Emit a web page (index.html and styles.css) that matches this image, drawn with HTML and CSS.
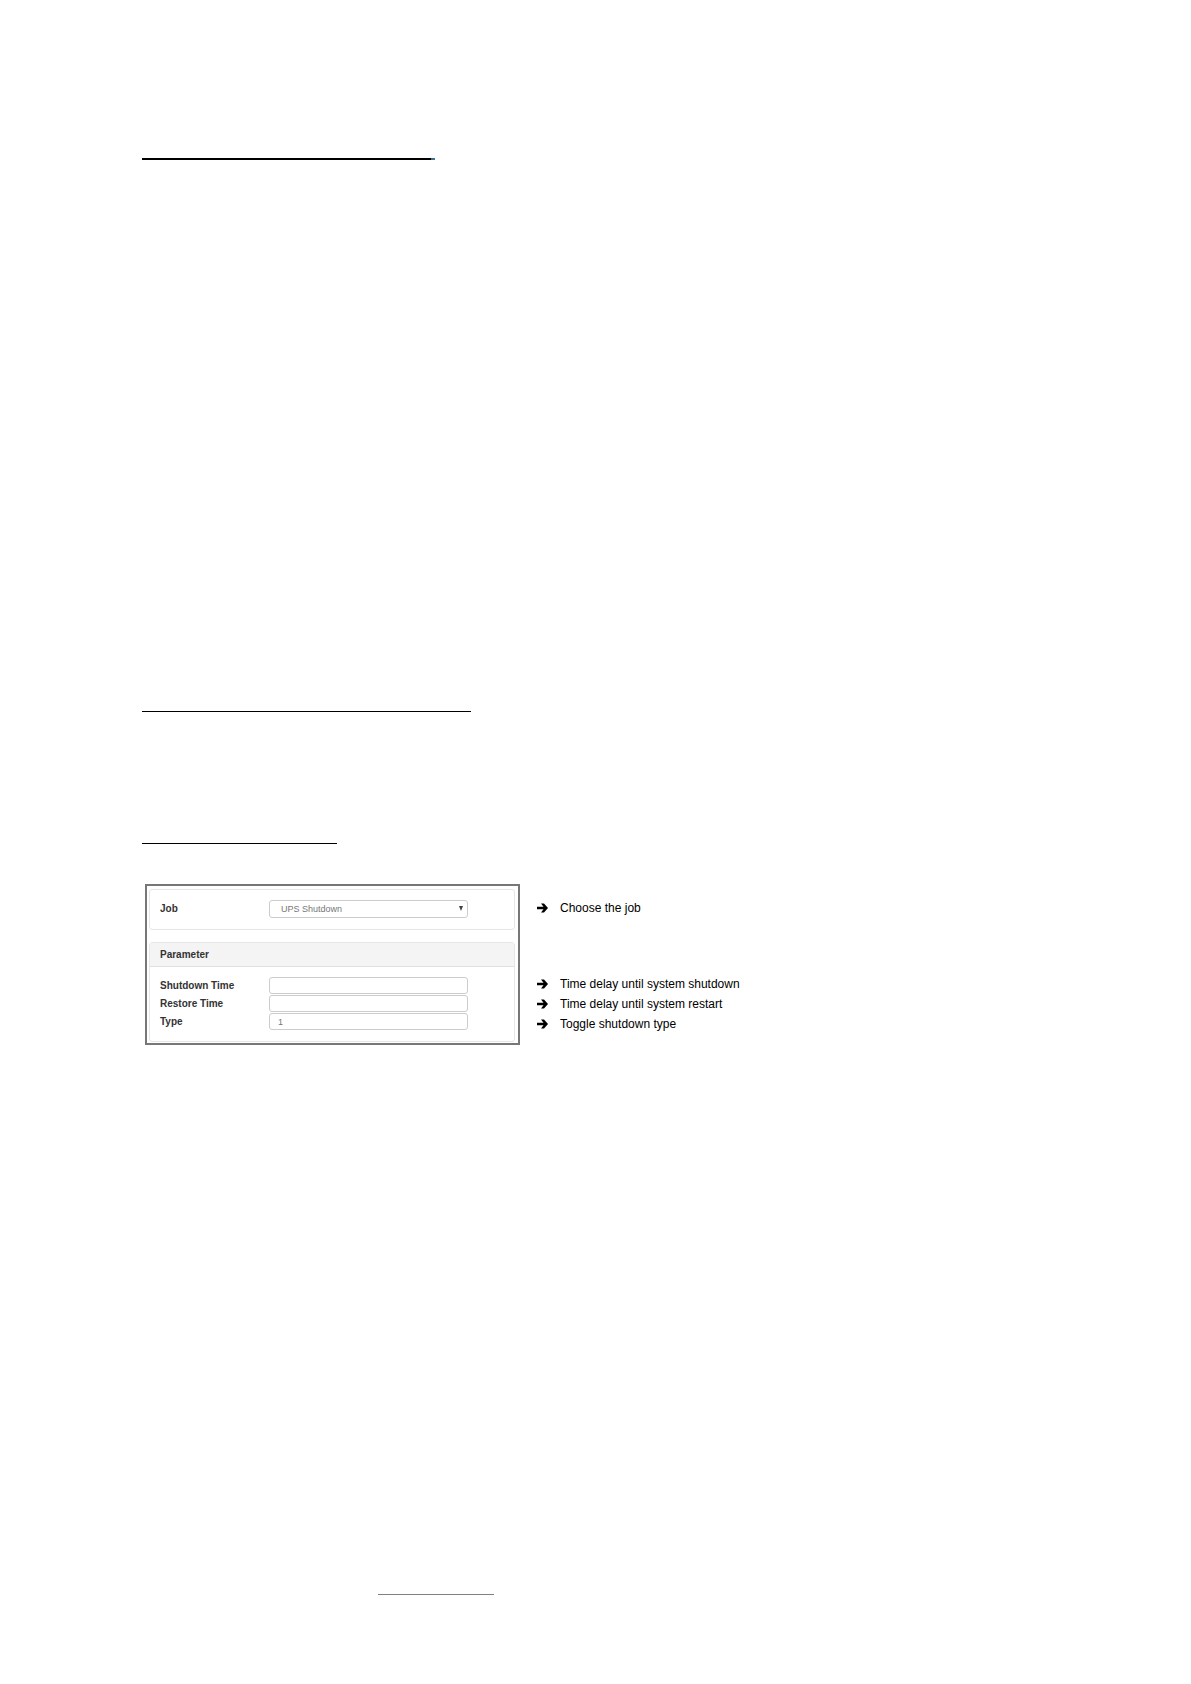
FILE: index.html
```html
<!DOCTYPE html>
<html lang="en">
<head>
<meta charset="utf-8">
<title>UPS Shutdown</title>
<link rel="stylesheet" href="styles.css">
</head>
<body>
<main class="page">
  <div class="rule rule-title"></div>
  <div class="rule rule-section"></div>
  <div class="rule rule-sub"></div>
  <section class="figure">
    <form class="frame">
      <div class="panel job">
        <div class="row row-job">
          <label for="job">Job</label>
          <div class="select-wrap">
            <select id="job" class="field"><option>UPS Shutdown</option></select>
            <svg class="caret" viewBox="0 0 4 5" aria-hidden="true"><path d="M0 0h4L2 5z"/></svg>
          </div>
        </div>
      </div>
      <div class="panel parameter">
        <h2 class="panel-head">Parameter</h2>
        <div class="rows">
          <div class="row"><label for="shutdown">Shutdown Time</label><input id="shutdown" class="field" type="text"></div>
          <div class="row"><label for="restore">Restore Time</label><input id="restore" class="field" type="text"></div>
          <div class="row"><label for="type">Type</label><input id="type" class="field" type="text" value="1"></div>
        </div>
      </div>
    </form>
    <ul class="notes">
      <li class="note note-job"><svg class="arrow" viewBox="0 0 11 10" aria-hidden="true"><path d="M0 3.700h6.500L4 .5h3L11 5 7 9.500H4l2.500-3.200H0z"/></svg>Choose the job</li>
      <li class="note"><svg class="arrow" viewBox="0 0 11 10" aria-hidden="true"><path d="M0 3.700h6.500L4 .5h3L11 5 7 9.500H4l2.500-3.200H0z"/></svg>Time delay until system shutdown</li>
      <li class="note"><svg class="arrow" viewBox="0 0 11 10" aria-hidden="true"><path d="M0 3.700h6.500L4 .5h3L11 5 7 9.500H4l2.500-3.200H0z"/></svg>Time delay until system restart</li>
      <li class="note"><svg class="arrow" viewBox="0 0 11 10" aria-hidden="true"><path d="M0 3.700h6.500L4 .5h3L11 5 7 9.500H4l2.500-3.200H0z"/></svg>Toggle shutdown type</li>
    </ul>
  </section>
</main>
<footer class="footer"><div class="rule rule-footer"></div></footer>
</body>
</html>
```
FILE: styles.css
```css
* { box-sizing: border-box; }

body {
  display: flex;
  flex-direction: column;
  min-height: 100vh;
  margin: 0;
  background: #fff;
  color: #000;
  font-family: "Liberation Sans", Arial, sans-serif;
  font-size: 12px;
}

.page { flex: 1; padding: 158px 142px 0; }

.rule { height: 1px; background: #000; }
.rule-title {
  display: flex;
  width: 293px;
  height: 2px;
}
.rule-title::after {
  content: "";
  width: 4px;
  margin-left: auto;
  background: #3f708f;
}
.rule-section { width: 329px; margin-top: 551px; }
.rule-sub { width: 195px; margin-top: 131px; }

.figure {
  display: flex;
  gap: 17px;
  margin-top: 40px;
  padding-left: 3px;
}

.frame {
  flex: 0 1 375px;
  padding: 3px 3px 1px 2px;
  border: 2px solid #777;
}

.panel {
  border: 1px solid #e6e6e6;
  border-radius: 3px;
}
.job { padding: 10px 46px 11px 10px; }
.parameter { margin-top: 12px; }
.panel-head {
  margin: 0;
  padding-left: 10px;
  border-bottom: 1px solid #e0e0e0;
  background: #f4f4f4;
  color: #333;
  font-size: 10px;
  font-weight: bold;
  line-height: 23px;
}
.rows {
  display: grid;
  gap: 1px;
  padding: 10px 46px 11px 10px;
}
.row {
  display: grid;
  grid-template-columns: 109px 1fr;
  align-items: center;
  color: #333;
  font-size: 10px;
  font-weight: bold;
  line-height: 16px;
}

.field {
  display: block;
  width: 100%;
  height: 17px;
  padding: 0 8px;
  border: 1px solid #ccc;
  border-radius: 3px;
  background: #fff;
  color: #777;
  font: 9px "Liberation Sans", Arial, sans-serif;
}
.row-job .field { height: 18px; appearance: none; padding-left: 11px; }
.select-wrap { position: relative; }
.caret {
  position: absolute;
  top: 6px;
  right: 5px;
  width: 4px;
  height: 5px;
  fill: #444;
}

.notes {
  margin: 0;
  padding: 14px 0 0;
  list-style: none;
}
.note {
  display: flex;
  align-items: center;
  gap: 12px;
  font-size: 12px;
  line-height: 20px;
}
.note-job { margin-bottom: 56px; }
.arrow { width: 11px; height: 10px; }

.footer { padding: 0 378px 89px; }
.rule-footer { width: 116px; background: #808080; }
```
